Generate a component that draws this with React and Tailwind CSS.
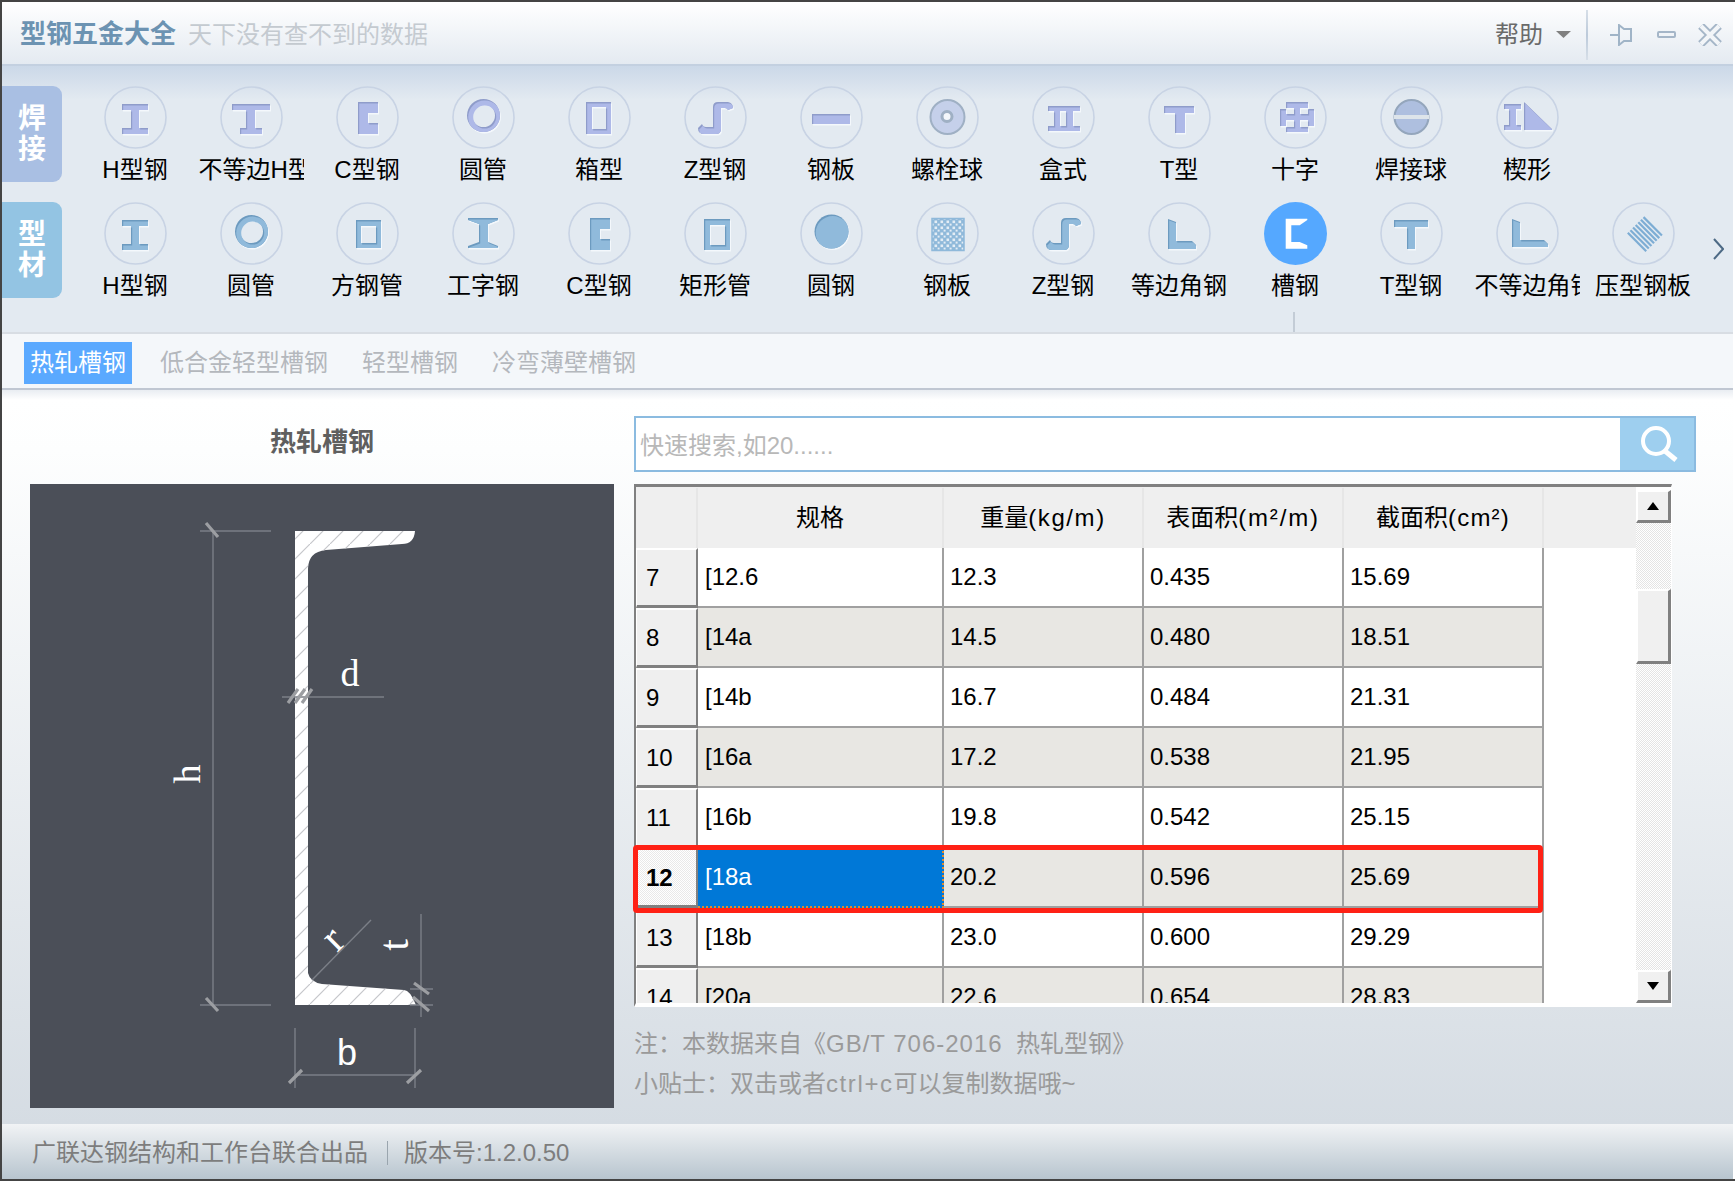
import React, { useId } from 'react';

const ring = (cx, cy, r) => `M${cx} ${cy - r}A${r} ${r} 0 1 0 ${cx} ${cy + r}A${r} ${r} 0 1 0 ${cx} ${cy - r}Z`;

const shapes = {
  h: 'M18 18H44V24H35V42H44V48H18V42H27V24H18Z',
  uneqH: 'M12 18H50V24H35V42H42V48H20V42H26V24H12Z',
  c: 'M22 16H42V27H32V37H42V48H22Z',
  tube: ring(31.5, 29.5, 16.5) + ring(31.5, 29.5, 11.5),
  box: 'M18 16H43V48H18ZM24 21V43H38V21Z',
  z: 'M29 40V21Q29 16 34 16H44Q49 17 49 22L44 24Q43 22 41 22H37V43Q37 48 32 48H20Q14 48 14 42L18 38Q19 41 22 41H29Z',
  plate: 'M12 28H50V38H12Z',
  twin: 'M16 20H48V25H41V40H48V45H16V40H22V25H16ZM28 25V40H34V25Z',
  t: 'M16 20H46V27H37V47H27V27H16Z',
  cross: 'M22 16H44V22H36V28H44V23H50V40H44V34H36V41H44V46H22V41H30V34H22V40H16V23H22V28H30V22H22Z',
  wedge: 'M8 18H25V23H20V39H25V44H8V39H13V23H8ZM28 16L56 43V44H28Z',
  square: 'M20 18H45V46H20ZM25 24V41H40V24Z',
  ibeam: 'M16 16H46V18L36 22V40L46 44V46H16V44L27 40V22L16 18Z',
  rect: 'M20 17H46V48H20ZM26 23V43H41V23Z',
  disc: ring(31.5, 29.5, 17),
  angle: 'M20 17L28 20V39H44L48 43V47H20Z',
  uneqAngle: 'M16 17L24 20V38H48L52 42V45H16Z',
  t2: 'M14 18H48V25H35V47H27V25H14Z',
};

// bevel look of the toolbar glyphs: white shadow, dark edge, light face
const Glyph = ({ d, tone }) => {
  const id = useId();
  const [light, dark] = tone === 'blue' ? ['#90badb', '#6c9abf'] : ['#aeb9e8', '#8f9cca'];
  return (
    <g>
      <clipPath id={id}>
        <path d={d} fillRule="evenodd" />
      </clipPath>
      <path d={d} fill="#f4f8fc" fillRule="evenodd" transform="translate(1 1.5)" />
      <path d={d} fill={dark} fillRule="evenodd" />
      <g clipPath={`url(#${id})`}>
        <path d={d} fill={light} fillRule="evenodd" transform="translate(1.2 1.6)" />
      </g>
    </g>
  );
};

const BoltBall = () => (
  <g>
    <circle cx="31.5" cy="31" r="17" fill="#c5d0ea" stroke="#9fb0c4" strokeWidth="2" />
    <circle cx="31" cy="30.5" r="5" fill="#f4f7fb" stroke="#9fb0c4" strokeWidth="3" />
  </g>
);

const WeldBall = () => (
  <g>
    <circle cx="31.5" cy="31" r="17" fill="#aebfdf" stroke="#94a6bc" strokeWidth="2" />
    <rect x="14" y="29" width="35" height="4" fill="#dde4ea" />
  </g>
);

const Checker = () => (
  <g>
    <pattern id="checker" patternUnits="userSpaceOnUse" width="6" height="6">
      <rect width="6" height="6" fill="#8fb9da" />
      <rect x="0.5" y="0.5" width="2.6" height="2.6" fill="#e4edf5" />
      <rect x="3.6" y="3.6" width="2" height="2" fill="#e4edf5" />
    </pattern>
    <rect x="16" y="16.5" width="32" height="32" fill="url(#checker)" stroke="#8fb9da" strokeWidth="1.5" />
  </g>
);

const Deck = () => (
  <g transform="rotate(45 33 32)" fill="#7dadd4">
    {[0, 1, 2, 3, 4, 5, 6].map((i) => (
      <rect key={i} x="20" y={20 + i * 3.7} width="26" height="2.2" />
    ))}
  </g>
);

const ActiveC = () => <path d="M21.7 16.7H43.3V18L35.7 23.3H27.3V40H35.7L43.3 43.3V46.7H21.7Z" fill="#fff" />;

const weldItems = [
  { label: 'H型钢', d: shapes.h },
  { label: '不等边H型', d: shapes.uneqH },
  { label: 'C型钢', d: shapes.c },
  { label: '圆管', d: shapes.tube },
  { label: '箱型', d: shapes.box },
  { label: 'Z型钢', d: shapes.z },
  { label: '钢板', d: shapes.plate },
  { label: '螺栓球', art: <BoltBall /> },
  { label: '盒式', d: shapes.twin },
  { label: 'T型', d: shapes.t },
  { label: '十字', d: shapes.cross },
  { label: '焊接球', art: <WeldBall /> },
  { label: '楔形', d: shapes.wedge },
];

const profileItems = [
  { label: 'H型钢', d: shapes.h },
  { label: '圆管', d: shapes.tube },
  { label: '方钢管', d: shapes.square },
  { label: '工字钢', d: shapes.ibeam },
  { label: 'C型钢', d: shapes.c },
  { label: '矩形管', d: shapes.rect },
  { label: '圆钢', d: shapes.disc },
  { label: '钢板', art: <Checker /> },
  { label: 'Z型钢', d: shapes.z },
  { label: '等边角钢', d: shapes.angle },
  { label: '槽钢', art: <ActiveC />, active: true },
  { label: 'T型钢', d: shapes.t2 },
  { label: '不等边角钢', d: shapes.uneqAngle },
  { label: '压型钢板', art: <Deck /> },
];

const rows = [
  { no: 7, spec: '[12.6', w: '12.3', s: '0.435', a: '15.69' },
  { no: 8, spec: '[14a', w: '14.5', s: '0.480', a: '18.51' },
  { no: 9, spec: '[14b', w: '16.7', s: '0.484', a: '21.31' },
  { no: 10, spec: '[16a', w: '17.2', s: '0.538', a: '21.95' },
  { no: 11, spec: '[16b', w: '19.8', s: '0.542', a: '25.15' },
  { no: 12, spec: '[18a', w: '20.2', s: '0.596', a: '25.69', selected: true },
  { no: 13, spec: '[18b', w: '23.0', s: '0.600', a: '29.29' },
  { no: 14, spec: '[20a', w: '22.6', s: '0.654', a: '28.83' },
];

const ToolItem = ({ item, tone }) => (
  <div className="flex w-[116px] shrink-0 flex-col items-center">
    <svg viewBox="0 0 63 63" className="h-[63px] w-[63px]">
      <circle
        cx="31.5"
        cy="31.5"
        r={item.active ? 31.5 : 30.5}
        fill={item.active ? '#55a8ff' : 'none'}
        stroke={item.active ? 'none' : '#c8d3e4'}
        strokeWidth="1.6"
      />
      {item.art || <Glyph d={item.d} tone={tone} />}
    </svg>
    <div className="mt-[6px] w-[105px] overflow-hidden whitespace-nowrap text-center text-[24px] leading-[30px] text-black">
      {item.label}
    </div>
  </div>
);

const SideTab = ({ color, children }) => (
  <div className={`flex h-[96px] w-[60px] shrink-0 flex-col items-center justify-center rounded-r-[9px] ${color} mr-[15px] text-[28px] font-bold leading-[31px] text-white`}>
    {children}
  </div>
);

const ChannelDrawing = () => (
  <svg viewBox="0 0 584 624" className="h-full w-full">
    <defs>
      <pattern id="hatch" patternUnits="userSpaceOnUse" width="20" height="20">
        <path d="M0 20L20 0" stroke="#c4c6ca" strokeWidth="1.2" />
      </pattern>
    </defs>
    <path
      id="channel"
      d="M265 47H385Q384 60 372 60L296 66Q278 68 278 85V489Q280 498 292 500L374 506Q380 506 386 521H265Z"
      fill="#fff"
    />
    <path
      d="M265 47H385Q384 60 372 60L296 66Q278 68 278 85V489Q280 498 292 500L374 506Q380 506 386 521H265Z"
      fill="url(#hatch)"
    />
    <g stroke="#7b7f87" strokeWidth="1.4" fill="none">
      <path d="M170 47H241M183 47V521M170 521H241" />
      <path d="M252 213H354" />
      <path d="M265 544V604M385 544V604M265 591H385" />
      <path d="M391 430V533M380 505H403M380 521H403" />
      <path d="M282 496L341 436" />
    </g>
    <g stroke="#9c9ea2" strokeWidth="3.2" fill="none">
      <path d="M176 39L188 53M176 514L188 527" />
      <path d="M258 219L268 205M265 219L275 205M272 219L282 205" />
      <path d="M259 599L272 586M377 599L391 586" />
      <path d="M384 499L399 510M383 513L399 527" />
    </g>
    <g fill="#fff" fontSize="38" fontFamily="'Liberation Serif', serif">
      <text x="320" y="202" textAnchor="middle">d</text>
      <text x="317" y="581" textAnchor="middle" fontFamily="'Liberation Sans', sans-serif" fontSize="36">b</text>
      <text x="170" y="290" textAnchor="middle" transform="rotate(-90 170 290)">h</text>
      <text x="312" y="464" textAnchor="middle" fontSize="42" transform="rotate(-45 312 464)">r</text>
      <text x="378" y="461" textAnchor="middle" fontSize="42" transform="rotate(-90 378 461)">t</text>
    </g>
  </svg>
);

const ScrollButton = ({ up }) => (
  <div className="flex h-[33px] shrink-0 items-center justify-center border-t-2 border-l-2 border-t-white border-l-white border-r-[3px] border-b-[3px] border-r-[#808080] border-b-[#808080] bg-[#f0f0f0]">
    <svg viewBox="0 0 14 10" className="h-[10px] w-[14px]">
      <path d={up ? 'M7 1L13 9H1Z' : 'M1 1H13L7 9Z'} fill="#000" />
    </svg>
  </div>
);

const App = () => {
  return (
    <div className="flex h-[1181px] w-[1735px] flex-col border-t-2 border-b-2 border-l-2 border-[#444] pr-[2px] font-['Liberation_Sans','Noto_Sans_CJK_SC',sans-serif]">
      {/* Title bar */}
      <div className="flex h-[64px] shrink-0 items-center border-b-2 border-[#c3d0e0] bg-gradient-to-b from-white to-[#e4eaf1] pl-[18px] pt-[3px]">
        <span className="text-[26px] font-bold text-[#6c93b2]">型钢五金大全</span>
        <span className="ml-[12px] text-[24px] text-[#c4cad0]">天下没有查不到的数据</span>
        <span className="ml-auto text-[24px] text-[#6a6a6a]">帮助</span>
        <svg viewBox="0 0 15 7" className="ml-[13px] h-[7px] w-[15px]">
          <path d="M0 0H15L7.5 7Z" fill="#808080" />
        </svg>
        <div className="ml-[15px] h-[50px] w-[2px] bg-gradient-to-b from-[#d7dfe8] via-[#bccada] to-[#d7dfe8]" />
        <svg viewBox="0 0 23 22" className="ml-[22px] h-[22px] w-[23px]" fill="none" stroke="#a0b4c7" strokeWidth="2">
          <path d="M0 11H9M9 1L14 5L21 5V17L14 17L9 21Z" />
        </svg>
        <svg viewBox="0 0 19 7" className="ml-[24px] h-[7px] w-[19px]" fill="none" stroke="#a5b6c8" strokeWidth="2">
          <rect x="1" y="1" width="17" height="5" rx="1" />
        </svg>
        <svg viewBox="0 0 24 22" className="ml-[22px] mr-[11px] h-[22px] w-[24px]" fill="none">
          <path d="M3 2L21 20M21 2L3 20" stroke="#a5b6c8" strokeWidth="8" />
          <path d="M3 2L21 20M21 2L3 20" stroke="#f2f5f8" strokeWidth="4" />
        </svg>
      </div>

      {/* Toolbar */}
      <div className="relative flex h-[268px] shrink-0 flex-col gap-[20px] border-b-2 border-[#d8dde3] bg-[linear-gradient(to_bottom,#cbd8e8,#e3eaf1_34px)] pt-[20px]">
        <div className="flex h-[96px] items-start">
          <SideTab color="bg-[#a9bfe3]">
            <span>焊</span>
            <span>接</span>
          </SideTab>
          {weldItems.map((item) => (
            <ToolItem key={item.label} item={item} tone="violet" />
          ))}
        </div>
        <div className="flex h-[96px] items-start">
          <SideTab color="bg-[#93c4e3]">
            <span>型</span>
            <span>材</span>
          </SideTab>
          {profileItems.map((item) => (
            <ToolItem key={item.label} item={item} tone="blue" />
          ))}
          <svg viewBox="0 0 11 22" className="ml-[12px] mt-[36px] h-[22px] w-[11px]" fill="none" stroke="#4d6a85" strokeWidth="2">
            <path d="M1 1L10 11L1 21" />
          </svg>
        </div>
        <div className="absolute bottom-0 left-[1291px] h-[20px] w-[2px] bg-[#c3ccd6]" />
      </div>

      {/* Tabs */}
      <div className="flex h-[56px] shrink-0 items-center gap-[22px] border-b-2 border-[#c0c7d2] bg-[#f4f7fa] pl-[22px] pt-[4px] text-[24px] text-[#b4b8bd]">
        <div className="flex h-[42px] items-center bg-[#5aa9ff] px-[6px] text-white">热轧槽钢</div>
        <div className="px-[6px]">低合金轻型槽钢</div>
        <div className="px-[6px]">轻型槽钢</div>
        <div className="px-[6px]">冷弯薄壁槽钢</div>
      </div>

      {/* Body */}
      <div className="flex h-[734px] shrink-0 bg-[linear-gradient(to_bottom,#e9edf2,#fff_10px,#fdfefe_60px,#d5dce3)]">
        <div className="ml-[28px] flex w-[584px] flex-col pt-[37px]">
          <div className="mb-[27px] text-center text-[26px] font-bold leading-[30px] text-[#5f5f5f]">热轧槽钢</div>
          <div className="h-[624px] bg-[#4b4f58]">
            <ChannelDrawing />
          </div>
        </div>

        <div className="ml-[20px] flex w-[1062px] flex-col pt-[26px]">
          <div className="flex h-[56px] border-2 border-[#8bbbe0] bg-white">
            <input
              readOnly
              placeholder="快速搜索,如20......"
              className="min-w-0 flex-1 bg-white pl-[4px] pt-[4px] text-[24px] outline-none placeholder:text-[#b8b8b8]"
            />
            <div className="flex w-[74px] items-center justify-center bg-[#9ecfef]">
              <svg viewBox="0 0 38 36" className="ml-[3px] h-[36px] w-[38px]" fill="none" stroke="#fff">
                <circle cx="16" cy="15" r="13" strokeWidth="4" />
                <path d="M25 25L36 34" strokeWidth="5" />
              </svg>
            </div>
          </div>

          {/* Table */}
          <div className="relative mt-[12px] flex h-[523px] w-[1038px] border-t-[3px] border-b-4 border-l-2 border-r border-t-[#808080] border-l-[#808080] border-b-white border-r-white bg-white text-[24px] text-black">
            <div className="h-[516px] w-[1000px] overflow-hidden">
              <div className="flex h-[61px] bg-[#efefef] pt-[1px]">
                <div className="h-full w-[62px] shrink-0 border-r-2 border-[#e6e6e6]" />
                <div className="flex h-full w-[246px] shrink-0 items-center justify-center border-r-2 border-[#e6e6e6]">规格</div>
                <div className="flex h-full w-[200px] shrink-0 items-center justify-center border-r-2 border-[#e6e6e6]">重量<span className="tracking-[1.6px]">(kg/m)</span></div>
                <div className="flex h-full w-[200px] shrink-0 items-center justify-center border-r-2 border-[#e6e6e6]">表面积<span className="tracking-[1.8px]">(m²/m)</span></div>
                <div className="flex h-full w-[200px] shrink-0 items-center justify-center border-r-2 border-[#e6e6e6]">截面积<span className="tracking-[1.2px]">(cm²)</span></div>
              </div>
              {rows.map((row) => (
                <div key={row.no} className="flex h-[60px]">
                  <div className={`flex h-full w-[62px] shrink-0 items-center border-t-2 border-l border-t-white border-l-white border-r-2 border-b-[3px] border-r-[#808080] border-b-[#808080] pl-[9px] ${row.selected ? 'bg-[repeating-conic-gradient(#e9e9e9_0_25%,#fff_0_50%)] bg-[length:2px_2px] font-bold' : 'bg-[#efefef]'}`}>
                    {row.no}
                  </div>
                  <div className={`flex h-full w-[246px] shrink-0 items-center border-r-2 border-b-2 pl-[7px] ${row.selected ? 'border-dotted border-[#e08a2e] bg-[#0078d7] text-white' : row.no % 2 === 0 ? 'border-[#a0a0a0] bg-[#e8e7e3]' : 'border-[#a0a0a0] bg-white'}`}>
                    {row.spec}
                  </div>
                  {[row.w, row.s, row.a].map((val, i) => (
                    <div key={i} className={`flex h-full w-[200px] shrink-0 items-center border-r-2 border-b-2 border-[#a0a0a0] pl-[6px] ${row.no % 2 === 0 ? 'bg-[#e8e7e3]' : 'bg-white'}`}>
                      {val}
                    </div>
                  ))}
                </div>
              ))}
            </div>

            {/* Scrollbar */}
            <div className="flex h-[516px] w-[35px] flex-col pt-[3px]">
              <ScrollButton up />
              <div className="h-[66px] bg-[repeating-conic-gradient(#e4e4e4_0_25%,#fff_0_50%)] bg-[length:2px_2px]" />
              <div className="h-[75px] border-t-2 border-l-2 border-t-white border-l-white border-r-[3px] border-b-[3px] border-r-[#808080] border-b-[#808080] bg-[#f0f0f0]" />
              <div className="flex-1 bg-[repeating-conic-gradient(#e4e4e4_0_25%,#fff_0_50%)] bg-[length:2px_2px]" />
              <ScrollButton />
            </div>

            {/* Red highlight around the picked row */}
            <div className="absolute left-[-3px] top-[358px] h-[68px] w-[910px] rounded-[4px] border-[5px] border-[#ff2115]" />
          </div>

          <div className="mt-[17px] whitespace-pre text-[24px] leading-[40px] text-[#9a9a9a]">
            注：本数据来自《<span className="tracking-[1px]">GB/T 706-2016</span>  热轧型钢》
          </div>
          <div className="whitespace-pre text-[24px] leading-[40px] text-[#9a9a9a]">
            小贴士：双击或者<span className="tracking-[1.6px]">ctrl+c</span>可以复制数据哦~
          </div>
        </div>
      </div>

      {/* Footer */}
      <div className="flex flex-1 items-center bg-gradient-to-b from-[#f1f3f5] to-[#b8c5cf] pl-[30px] pt-[3px] text-[24px] text-[#7d7d7d]">
        <span>广联达钢结构和工作台联合出品</span>
        <div className="ml-[19px] h-[24px] w-[1px] bg-[#9aa5ae]" />
        <span className="ml-[16px]">版本号:1.2.0.50</span>
      </div>
    </div>
  );
};

export default App;
